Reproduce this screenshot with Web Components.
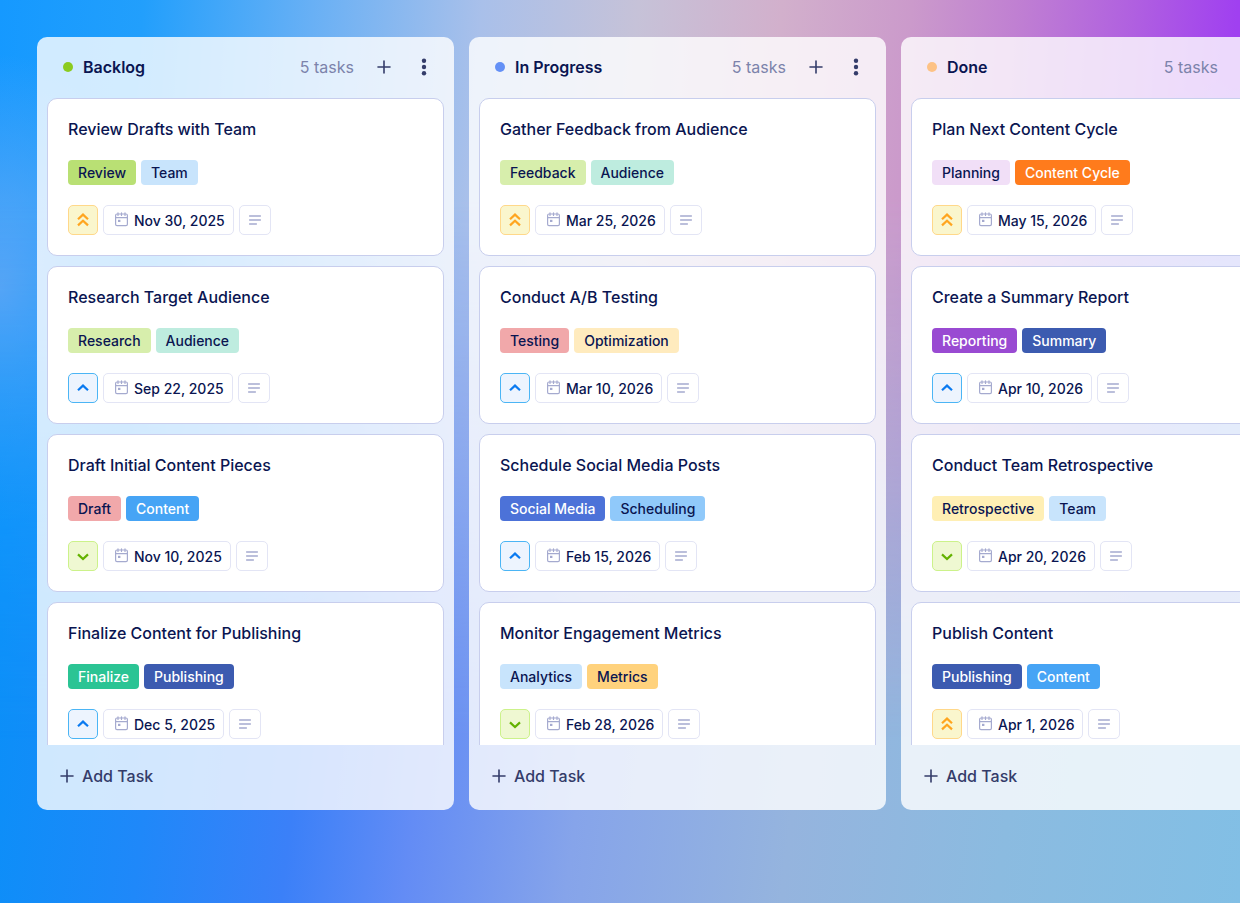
<!DOCTYPE html>
<html lang="en">
<head>
<meta charset="utf-8">
<meta name="viewport" content="width=device-width, initial-scale=1">
<title>Content Board</title>
<style>
  body {
    margin: 0;
    font-family: Inter, "Liberation Sans", sans-serif;
    color: #0a1551;
  }
</style>
</head>
<body>

<task-board>
  <task-column name="Backlog" color="#8bcb1f">
    <task-card name="Review Drafts with Team" priority="highest" date="Nov 30, 2025">
      <task-tag color="#b9e074">Review</task-tag>
      <task-tag color="#c8e4fc">Team</task-tag>
    </task-card>
    <task-card name="Research Target Audience" priority="high" date="Sep 22, 2025">
      <task-tag color="#d7eeac">Research</task-tag>
      <task-tag color="#beecdf">Audience</task-tag>
    </task-card>
    <task-card name="Draft Initial Content Pieces" priority="low" date="Nov 10, 2025">
      <task-tag color="#f1a8aa">Draft</task-tag>
      <task-tag color="#46a4f5" light>Content</task-tag>
    </task-card>
    <task-card name="Finalize Content for Publishing" priority="high" date="Dec 5, 2025">
      <task-tag color="#2bc494" light>Finalize</task-tag>
      <task-tag color="#3c5bb0" light>Publishing</task-tag>
    </task-card>
  </task-column>

  <task-column name="In Progress" color="#6490f6">
    <task-card name="Gather Feedback from Audience" priority="highest" date="Mar 25, 2026">
      <task-tag color="#d7eeac">Feedback</task-tag>
      <task-tag color="#beecdf">Audience</task-tag>
    </task-card>
    <task-card name="Conduct A/B Testing" priority="high" date="Mar 10, 2026">
      <task-tag color="#f1a8aa">Testing</task-tag>
      <task-tag color="#ffebbe">Optimization</task-tag>
    </task-card>
    <task-card name="Schedule Social Media Posts" priority="high" date="Feb 15, 2026">
      <task-tag color="#4c72d8" light>Social Media</task-tag>
      <task-tag color="#90c9fa">Scheduling</task-tag>
    </task-card>
    <task-card name="Monitor Engagement Metrics" priority="low" date="Feb 28, 2026">
      <task-tag color="#c8e4fc">Analytics</task-tag>
      <task-tag color="#ffd27d">Metrics</task-tag>
    </task-card>
  </task-column>

  <task-column name="Done" color="#fdc285">
    <task-card name="Plan Next Content Cycle" priority="highest" date="May 15, 2026">
      <task-tag color="#f1dff7">Planning</task-tag>
      <task-tag color="#ff7b1c" light>Content Cycle</task-tag>
    </task-card>
    <task-card name="Create a Summary Report" priority="high" date="Apr 10, 2026">
      <task-tag color="#994ad2" light>Reporting</task-tag>
      <task-tag color="#3c5bb0" light>Summary</task-tag>
    </task-card>
    <task-card name="Conduct Team Retrospective" priority="low" date="Apr 20, 2026">
      <task-tag color="#ffefb4">Retrospective</task-tag>
      <task-tag color="#c8e4fc">Team</task-tag>
    </task-card>
    <task-card name="Publish Content" priority="highest" date="Apr 1, 2026">
      <task-tag color="#3c5bb0" light>Publishing</task-tag>
      <task-tag color="#46a4f5" light>Content</task-tag>
    </task-card>
  </task-column>
</task-board>

<template id="board-template">
  <style>
    :host {
      display: grid;
      grid-template: 100vh / 100%;
      overflow: hidden;
      background: linear-gradient(97deg, #0890f8 4%, #1f88f9 18%, #3b80f8 29%, #638cf5 38%, #86a4ea 50%, #95b4de 66%, #8bbbe0 82%, #82bfe5 100%);
    }
    /* both layers share the one grid cell */
    .sky, .columns {
      grid-area: 1 / 1;
    }
    /* warm upper half, fades into the host's blue towards the bottom */
    .sky {
      background:
        radial-gradient(ellipse 26% 34% at 104% 42%, #62a4ee 0%, #62a4ee00 100%),
        radial-gradient(ellipse 12% 26% at 0% 32%, #62a8f5 0%, #62a8f500 100%),
        linear-gradient(94deg, #1599ff 0%, #229ffc 11%, #68b0f5 24%, #a9c0ea 37%, #c6c2d8 49%, #d2b0cc 60%, #cb9acb 70%, #c080d2 78%, #b060e0 87%, #a040f0 95%);
      -webkit-mask-image: linear-gradient(to bottom, #000 22%, #0008 52%, #0000 82%);
      mask-image: linear-gradient(to bottom, #000 22%, #0008 52%, #0000 82%);
    }
    .columns {
      display: flex;
      gap: 15px;
      box-sizing: border-box;
      min-height: 0;
      padding: 37px 37px 93px;
      z-index: 1;
    }
  </style>
  <div class="sky"></div>
  <div class="columns"><slot></slot></div>
</template>

<template id="column-template">
  <style>
    :host {
      display: flex;
      flex-direction: column;
      flex: 0 0 417px;
      box-sizing: border-box;
      min-height: 0;
      padding: 0 10px;
      border-radius: 10px;
      background: #ffffffcc;
    }
    header {
      display: flex;
      align-items: center;
      flex: none;
      height: 60px;
      padding: 0 10px 0 16px;
    }
    .dot {
      width: 10px;
      height: 10px;
      margin-right: 10px;
      border-radius: 50%;
    }
    h2 {
      flex: 1;
      margin: 0;
      font-size: 16px;
      font-weight: 600;
    }
    .count {
      margin-right: 20px;
      font-size: 16px;
      color: #7c83ab;
    }
    button {
      display: flex;
      align-items: center;
      padding: 0;
      border: 0;
      background: none;
      color: #343c6a;
      font: inherit;
      cursor: pointer;
    }
    .more {
      margin-left: 20px;
    }
    .list {
      display: flex;
      flex-direction: column;
      flex: 1;
      gap: 10px;
      min-height: 0;
      padding-top: 1px;
      overflow: hidden;
    }
    footer {
      display: flex;
      align-items: center;
      flex: none;
      height: 65px;
      padding: 0 10px 4px;
      box-sizing: border-box;
    }
    .add {
      gap: 5px;
      font-size: 16px;
      font-weight: 500;
    }
  </style>
  <header>
    <span class="dot"></span>
    <h2></h2>
    <span class="count">5 tasks</span>
    <button class="plus" aria-label="Add task">
      <svg width="20" height="20" viewBox="0 0 20 20" fill="none" stroke="currentColor" stroke-width="1.6" stroke-linecap="round"><path d="M10 4v12M4 10h12"/></svg>
    </button>
    <button class="more" aria-label="Column menu">
      <svg width="20" height="20" viewBox="0 0 20 20" fill="currentColor"><circle cx="10" cy="3.8" r="2.2"/><circle cx="10" cy="10" r="2.2"/><circle cx="10" cy="16.2" r="2.2"/></svg>
    </button>
  </header>
  <div class="list"><slot></slot></div>
  <footer>
    <button class="add">
      <svg width="20" height="20" viewBox="0 0 20 20" fill="none" stroke="currentColor" stroke-width="1.6" stroke-linecap="round"><path d="M10 4v12M4 10h12"/></svg>
      Add Task
    </button>
  </footer>
</template>

<template id="card-template">
  <style>
    :host {
      display: block;
      flex: none;
      padding: 18px 20px 20px;
      border: 1px solid #c8ceed;
      border-radius: 10px;
      background: #fff;
    }
    h3 {
      margin: 0;
      font-size: 16px;
      font-weight: 500;
      line-height: 24px;
    }
    .tags {
      display: flex;
      gap: 5px;
      margin: 19px 0 20px;
    }
    .meta {
      display: flex;
      gap: 5px;
    }
    .meta > * {
      display: flex;
      align-items: center;
      justify-content: center;
      box-sizing: border-box;
      height: 30px;
      padding: 0;
      border: 1px solid #e3e5f5;
      border-radius: 5px;
      background: #fff;
      color: inherit;
      font: inherit;
      font-size: 14px;
      font-weight: 500;
    }
    .priority {
      width: 30px;
    }
    .priority.highest {
      border-color: #ffd88a;
      background: #faf6cd;
      color: #ffa51f;
    }
    .priority.high {
      border-color: #4bb5f5;
      background: #edf4fe;
      color: #0a7af0;
    }
    .priority.low {
      border-color: #ccf28a;
      background: #eff8d2;
      color: #64b200;
    }
    .date {
      gap: 5px;
      padding: 0 8px 0 10px;
    }
    .note {
      width: 32px;
    }
    .date svg, .note svg {
      color: #a5aacf;
    }
  </style>
  <h3></h3>
  <div class="tags"><slot></slot></div>
  <div class="meta">
    <button class="priority"></button>
    <button class="date">
      <svg width="15" height="16" viewBox="0 0 15 16" fill="none" stroke="currentColor" stroke-width="1.2" stroke-linecap="round"><rect x="1.6" y="2" width="11.8" height="11.6" rx="1.4"/><path d="M1.6 5.6h11.8M4 .8v2.6M7.5 .8v2.6M11 .8v2.6"/><rect x="4" y="7.8" width="2.4" height="2.2" fill="currentColor" stroke="none"/></svg>
      <span></span>
    </button>
    <button class="note" aria-label="Description">
      <svg width="14" height="12" viewBox="0 0 14 12" fill="none" stroke="currentColor" stroke-width="1.3" stroke-linecap="round"><path d="M1.6 2h10.8M1.6 6h10.8M1.6 10h6.8"/></svg>
    </button>
  </div>
</template>

<template id="tag-template">
  <style>
    :host {
      display: block;
      padding: 0 10px;
      border-radius: 4px;
      font-size: 14px;
      font-weight: 500;
      line-height: 25px;
      white-space: nowrap;
    }
    :host([light]) {
      color: #fff;
    }
  </style>
  <slot></slot>
</template>

<script>
// attach an open shadow root and fill it from a template
function render(el, id) {
  el.attachShadow({ mode: "open" });
  el.shadowRoot.appendChild(document.getElementById(id).content.cloneNode(true));
}

const chevrons = {
  highest: "M3 7.2L8 2.6l5 4.6M3 13.4L8 8.8l5 4.6",
  high: "M3 10.2L8 5.6l5 4.6",
  low: "M3 6.4L8 11l5-4.6"
};

class TaskBoard extends HTMLElement {
  constructor() {
    super();
    render(this, "board-template");
  }
}

class TaskColumn extends HTMLElement {
  constructor() {
    super();
    render(this, "column-template");
  }

  connectedCallback() {
    this.shadowRoot.querySelector("h2").textContent = this.getAttribute("name");
    this.shadowRoot.querySelector(".dot").style.background = this.getAttribute("color");
  }
}

class TaskCard extends HTMLElement {
  constructor() {
    super();
    render(this, "card-template");
  }

  connectedCallback() {
    const level = this.getAttribute("priority");
    const priority = this.shadowRoot.querySelector(".priority");
    this.shadowRoot.querySelector("h3").textContent = this.getAttribute("name");
    this.shadowRoot.querySelector(".date span").textContent = this.getAttribute("date");
    priority.classList.add(level);
    priority.setAttribute("aria-label", `Priority: ${level}`);
    priority.innerHTML = `<svg width="16" height="16" viewBox="0 0 16 16" fill="none" stroke="currentColor" stroke-width="2.2"><path d="${chevrons[level]}"/></svg>`;
  }
}

class TaskTag extends HTMLElement {
  constructor() {
    super();
    render(this, "tag-template");
  }

  connectedCallback() {
    this.style.background = this.getAttribute("color");
  }
}

customElements.define("task-board", TaskBoard);
customElements.define("task-column", TaskColumn);
customElements.define("task-card", TaskCard);
customElements.define("task-tag", TaskTag);
</script>
</body>
</html>
